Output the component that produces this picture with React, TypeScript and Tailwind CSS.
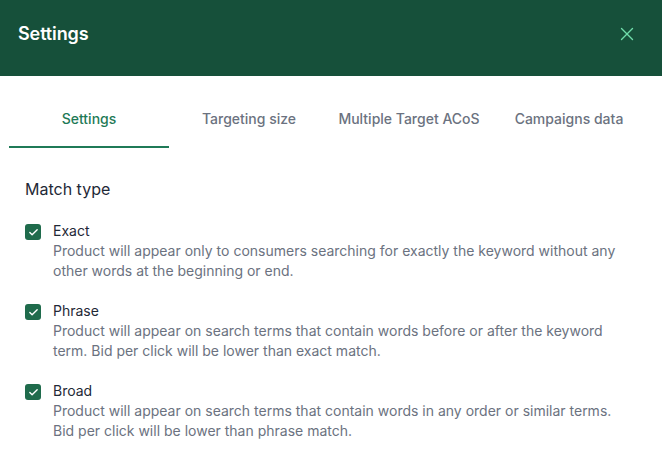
import { useState } from "react";
import { X, Check } from "lucide-react";

const tabs = ["Settings", "Targeting size", "Multiple Target ACoS", "Campaigns data"];

const matchTypes = [
  {
    label: "Exact",
    desc: "Product will appear only to consumers searching for exactly the keyword without any other words at the beginning or end.",
  },
  {
    label: "Phrase",
    desc: "Product will appear on search terms that contain words before or after the keyword term. Bid per click will be lower than exact match.",
  },
  {
    label: "Broad",
    desc: "Product will appear on search terms that contain words in any order or similar terms. Bid per click will be lower than phrase match.",
  },
];

export default function App() {
  const [active, setActive] = useState("Settings");
  const [checked, setChecked] = useState<Record<string, boolean>>({ Exact: true, Phrase: true, Broad: true });

  return (
    <div className="w-[662px] h-[452px] bg-white overflow-hidden font-['Inter',sans-serif]">
      <div className="h-[76px] bg-[#16503a] px-[18px] pt-[22px] flex items-start justify-between">
        <h1 className="text-white text-[18px] font-semibold leading-6 tracking-[-0.1px]">Settings</h1>
        <button className="mr-[6px] mt-[1px] text-[#6fdcaa]">
          <X size={22} strokeWidth={1.5} />
        </button>
      </div>

      <div className="mt-[14px] px-[9px] flex">
        {tabs.map((t) => (
          <button
            key={t}
            onClick={() => setActive(t)}
            className={`w-[160px] h-[58px] flex items-center justify-center text-[14px] font-medium border-b-2 ${
              active === t ? "text-[#1f7a57] border-[#1f7a57]" : "text-[#6b7280] border-transparent"
            }`}
          >
            {t}
          </button>
        ))}
      </div>

      <div className="px-[25px] pt-[29px]">
        <h2 className="text-[16px] leading-6 text-[#1f2937]">Match type</h2>
        <div className="mt-[20px] flex flex-col gap-[20px]">
          {matchTypes.map((m) => (
            <div key={m.label} className="flex items-start gap-3">
              <button
                onClick={() => setChecked({ ...checked, [m.label]: !checked[m.label] })}
                className={`mt-[3px] w-4 h-4 rounded-[3px] flex items-center justify-center shrink-0 ${
                  checked[m.label] ? "bg-[#1f6b4c]" : "border border-gray-300 bg-white"
                }`}
              >
                {checked[m.label] && <Check size={11} strokeWidth={3} className="text-white" />}
              </button>
              <div>
                <div className="text-[14px] leading-5 text-[#1f2937]">{m.label}</div>
                <p className="text-[14px] leading-5 text-[#6b7280] max-w-[570px]">{m.desc}</p>
              </div>
            </div>
          ))}
        </div>
      </div>
    </div>
  );
}
